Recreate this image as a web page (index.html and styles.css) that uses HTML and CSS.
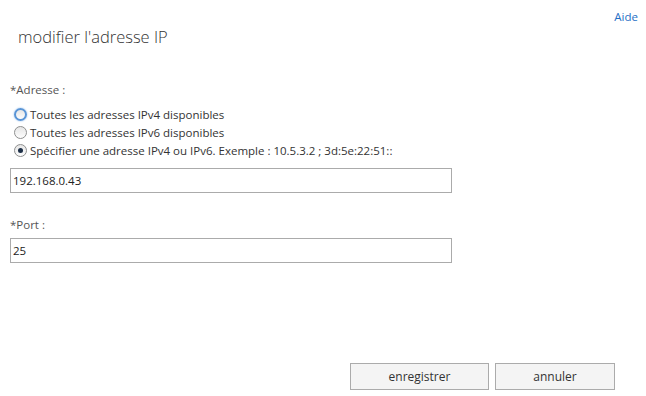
FILE: index.html
```html
<!DOCTYPE html>
<html lang="fr">
<head>
    <meta charset="UTF-8">
    <title>modifier l'adresse IP</title>
    <link rel="stylesheet" href="styles.css">
</head>
<body>
<div class="dialog">

    <div class="dialog-header">
        <h1 class="dialog-title">modifier l'adresse IP</h1>
        <a href="#" class="help-link">Aide</a>
    </div>

    <div class="field">
        <div class="field-label">*Adresse :</div>
        <label class="radio-row">
            <input type="radio" name="addr" class="radio focused">
            <span>Toutes les adresses IPv4 disponibles</span>
        </label>
        <label class="radio-row">
            <input type="radio" name="addr" class="radio">
            <span>Toutes les adresses IPv6 disponibles</span>
        </label>
        <label class="radio-row">
            <input type="radio" name="addr" class="radio" checked>
            <span>Spécifier une adresse IPv4 ou IPv6. Exemple : 10.5.3.2 ; 3d:5e:22:51::</span>
        </label>
        <input type="text" class="text-input addr-input" value="192.168.0.43">
    </div>

    <div class="field port-field">
        <div class="field-label">*Port :</div>
        <input type="text" class="text-input" value="25">
    </div>

    <div class="dialog-footer">
        <button class="button save-button">enregistrer</button>
        <button class="button cancel-button">annuler</button>
    </div>

</div>
</body>
</html>
```

FILE: styles.css
```css
body {
    margin: 0;
    padding: 0;
    background-color: #ffffff;
    font-family: "Open Sans", "Noto Sans", sans-serif;
    color: #444444;
}
.dialog {
    display: flex;
    flex-direction: column;
    height: 396px;
    padding: 0 10px;
    box-sizing: border-box;
}
.dialog-header {
    display: flex;
    justify-content: space-between;
    align-items: flex-start;
    height: 81px;
}
.dialog-title {
    margin: 25px 0 0 8px;
    font-size: 16.5px;
    font-weight: 300;
    line-height: 24px;
    color: #333333;
}
.help-link {
    margin-top: 9px;
    margin-right: -2px;
    font-size: 11.5px;
    line-height: 16px;
    color: #1f6fc5;
    text-decoration: none;
}
.field {
    display: flex;
    flex-direction: column;
}
.field-label {
    font-size: 11.5px;
    line-height: 18px;
    color: #555555;
    margin-bottom: 6px;
}
.radio-row {
    display: flex;
    align-items: center;
    height: 18px;
    font-size: 11.5px;
    color: #333333;
}
.radio {
    appearance: none;
    -webkit-appearance: none;
    width: 13px;
    height: 13px;
    margin: 0 3px 0 4px;
    border: 1px solid #8e8f8f;
    border-radius: 50%;
    background: linear-gradient(#e6e6e6, #fdfdfd);
    box-sizing: border-box;
    position: relative;
}
.radio.focused {
    border: 2px solid #5a95d6;
    box-shadow: 0 0 2px #8ab8ea;
}
.radio:checked::after {
    content: "";
    position: absolute;
    top: 3px;
    left: 3px;
    width: 5px;
    height: 5px;
    border-radius: 50%;
    background: #1d2f47;
}
.text-input {
    width: 442px;
    height: 25px;
    box-sizing: border-box;
    border: 1px solid #ababab;
    padding: 0 2px;
    font-family: "Open Sans", "Noto Sans", sans-serif;
    font-size: 11.5px;
    color: #222222;
    outline: none;
}
.addr-input {
    margin-top: 9px;
}
.port-field {
    margin-top: 23px;
}
.port-field .field-label {
    margin-bottom: 4px;
}
.dialog-footer {
    margin-top: auto;
    margin-bottom: 6px;
    margin-right: 21px;
    display: flex;
    justify-content: flex-end;
    gap: 6px;
}
.button {
    height: 27px;
    background: #f4f4f4;
    border: 1px solid #ababab;
    font-family: "Open Sans", "Noto Sans", sans-serif;
    font-size: 12px;
    color: #333333;
    padding: 0;
}
.save-button {
    width: 139px;
}
.cancel-button {
    width: 120px;
}
```
